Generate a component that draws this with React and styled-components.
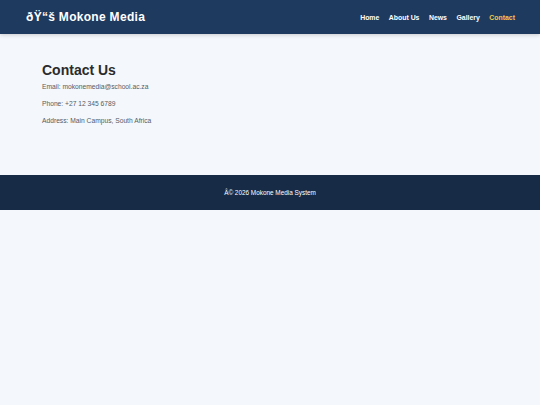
import React from "react";
import styled, { createGlobalStyle } from "styled-components";

const Global = createGlobalStyle`
  html, body {
    margin: 0;
    padding: 0;
    background: #f4f7fb;
    font-family: "Liberation Sans", Arial, sans-serif;
  }
`;

const Header = styled.header`
  height: 34px;
  background: #1e3a5f;
  display: flex;
  align-items: center;
  justify-content: space-between;
  padding: 0 25px 0 26px;
  box-shadow: 0 1px 4px rgba(0, 0, 0, 0.18);
  position: relative;
  z-index: 1;
`;

const Logo = styled.div`
  color: #ffffff;
  font-weight: 700;
  font-size: 12px;
  letter-spacing: 0.3px;
`;

const Nav = styled.nav`
  display: flex;
  gap: 9.5px;
`;

const NavLink = styled.a`
  color: ${(p) => (p.$active ? "#f2c94c" : "#ffffff")};
  font-size: 6.9px;
  font-weight: 700;
  text-decoration: none;
`;

const Section = styled.section`
  padding: 28px 42px 42px;
  height: 71px;
`;

const Title = styled.h2`
  margin: 0 0 5px;
  font-size: 14px;
  font-weight: 700;
  color: #2b2b2b;
`;

const Line = styled.p`
  margin: 0 0 10px;
  font-size: 6.7px;
  line-height: 7px;
  color: #555b63;
`;

const Footer = styled.footer`
  height: 35px;
  background: #172b47;
  display: flex;
  align-items: center;
  justify-content: center;
  color: #ffffff;
  font-size: 6.4px;
`;

const links = ["Home", "About Us", "News", "Gallery", "Contact"];

export default function App() {
  return (
    <>
      <Global />
      <Header>
        <Logo>ðŸ“š Mokone Media</Logo>
        <Nav>
          {links.map((l) => (
            <NavLink key={l} href="#" $active={l === "Contact"}>
              {l}
            </NavLink>
          ))}
        </Nav>
      </Header>
      <Section>
        <Title>Contact Us</Title>
        <Line>Email: mokonemedia@school.ac.za</Line>
        <Line>Phone: +27 12 345 6789</Line>
        <Line>Address: Main Campus, South Africa</Line>
      </Section>
      <Footer>Â© 2026 Mokone Media System</Footer>
    </>
  );
}
